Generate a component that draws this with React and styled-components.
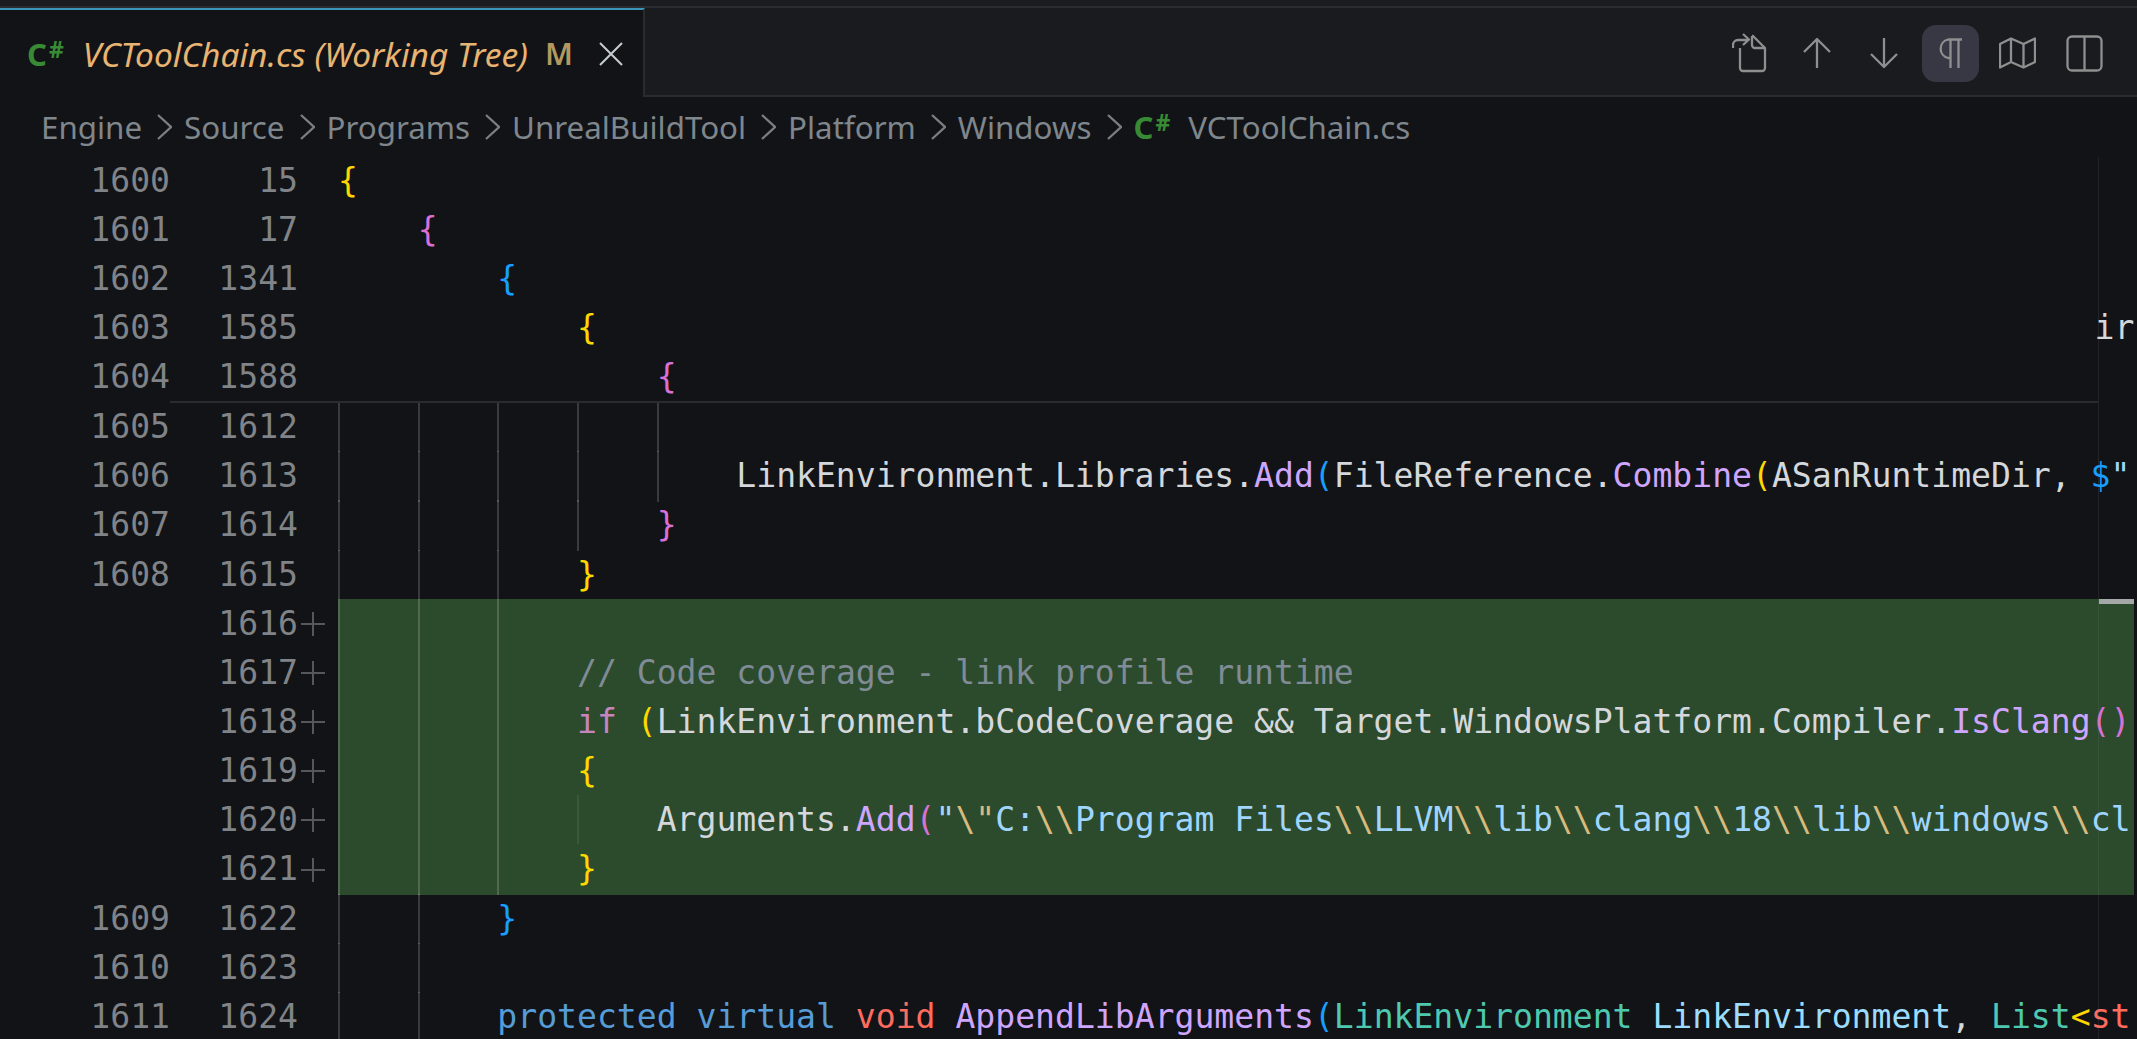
import React from 'react';
import styled, { createGlobalStyle } from 'styled-components';

const GlobalStyle = createGlobalStyle`
  html, body {
    margin: 0;
    height: 100%;
    overflow: hidden;
    background: #121316;
  }
`;

const uiFont = `'Noto Sans', 'Open Sans', sans-serif`;
const codeFont = `'DejaVu Sans Mono', 'Liberation Mono', monospace`;

const colors = {
  text: '#d4d8dc',
  comment: '#7f8c96',
  keyword: '#569cd6',
  control: '#c586c0',
  red: '#ff6b5e',
  fn: '#cfa6ff',
  type: '#4ec9b0',
  param: '#9cdcfe',
  str: '#9fd5ff',
  esc: '#d7ba7d',
  yellow: '#ffd700',
  pink: '#da70d6',
  blue: '#179fff',
};

const Page = styled.div`
  width: 2137px;
  height: 1039px;
  overflow: hidden;
  background: #121316;
  display: flex;
  flex-direction: column;
`;

const TopStrip = styled.div`
  height: 6px;
  background: #1a1c1f;
  border-bottom: 2px solid #2a2b2d;
`;

const TabBar = styled.div`
  height: 87px;
  display: flex;
  align-items: center;
  justify-content: space-between;
  background: #191b1e;
  border-bottom: 2px solid #2a2b2d;
  padding-right: 24px;
`;

const Tab = styled.div`
  width: 645px;
  height: 89px;
  margin-bottom: -2px;
  box-sizing: border-box;
  display: flex;
  align-items: center;
  padding-left: 27px;
  background: #121316;
  border-top: 2px solid #3b95b8;
  border-right: 2px solid #2a2b2d;
  font-family: ${uiFont};
`;

const CSharp = styled.span`
  display: inline-flex;
  align-items: flex-start;
  font-family: ${uiFont};
  font-weight: 700;
  font-size: 31px;
  line-height: 34px;
  color: #388a34;
  margin-right: ${(p) => p.$gap}px;
  sup {
    font-size: 23px;
    line-height: 24px;
    margin-left: 2px;
    vertical-align: baseline;
  }
`;

const TabTitle = styled.span`
  font-size: 33.5px;
  font-style: italic;
  color: #e8b473;
  white-space: nowrap;
`;

const TabBadge = styled.span`
  margin-left: 17px;
  font-size: 30px;
  font-weight: 600;
  color: #b3995f;
`;

const CloseIcon = styled.svg`
  margin-left: 25px;
  width: 26px;
  height: 26px;
  stroke: #c5cdd3;
  stroke-width: 2;
  fill: none;
`;

const Actions = styled.div`
  display: flex;
  gap: 10px;
  margin-top: 3px;
`;

const ActionButton = styled.div`
  width: 57px;
  height: 57px;
  display: flex;
  align-items: center;
  justify-content: center;
  border-radius: 14px;
  background: ${(p) => (p.$active ? '#373844' : 'transparent')};
  svg {
    fill: none;
    stroke: #8f8f8f;
    stroke-width: 2.3;
    stroke-linejoin: round;
  }
`;

const Breadcrumbs = styled.div`
  height: 59.5px;
  display: flex;
  align-items: center;
  padding-left: 41px;
  font-family: ${uiFont};
  font-size: 31.3px;
  color: #7f868c;
  white-space: nowrap;
`;

const Chevron = styled.svg`
  width: 15px;
  height: 26px;
  margin: 0 12px 0 15px;
  fill: none;
  stroke: #7a7f84;
  stroke-width: 2.3;
`;

const Editor = styled.div`
  position: relative;
  flex: 1;
  overflow: hidden;
`;

const StickySection = styled.div`
  position: relative;
  &::after {
    content: '';
    position: absolute;
    left: 170px;
    bottom: -1px;
    width: 1928px;
    height: 2px;
    background: #2a2b2d;
    z-index: 2;
  }
`;

const Row = styled.div`
  display: grid;
  grid-template-columns: 170px 128px 40px 1796px;
  height: 49.15px;
  line-height: ${(p) => (p.$sticky ? '47.15px' : '50.15px')};
  font-family: ${codeFont};
  font-size: 33.1px;
  color: #808488;
`;

const LineNumber = styled.span`
  text-align: right;
`;

const PlusCell = styled.span`
  display: flex;
  align-items: center;
  padding-left: 3px;
  svg {
    width: 24px;
    height: 24px;
    stroke: #55585b;
    stroke-width: 2;
  }
`;

const CodeCell = styled.div`
  position: relative;
  overflow: hidden;
  white-space: pre;
  color: ${colors.text};
  background: ${(p) => (p.$added ? '#2c4a2c' : 'transparent')};
`;

const Guide = styled.i`
  position: absolute;
  top: 0;
  bottom: 0;
  left: ${(p) => p.$col}ch;
  width: 2px;
  background: ${(p) => (p.$faint ? 'rgba(255,255,255,0.08)' : 'rgba(255,255,255,0.17)')};
`;

const Token = styled.span`
  color: ${(p) => colors[p.$kind]};
`;

const FarText = styled.span`
  margin-left: 75.2ch;
`;

const RulerLine = styled.div`
  position: absolute;
  left: 2098px;
  top: 0;
  bottom: 0;
  width: 1px;
  background: rgba(128, 128, 128, 0.16);
`;

const RulerThumb = styled.div`
  position: absolute;
  left: 2099px;
  top: 442px;
  width: 35px;
  height: 5px;
  background: #a4a8a6;
`;

const T = ({ k, children }) => <Token $kind={k}>{children}</Token>;

const CSharpIcon = ({ gap }) => (
  <CSharp $gap={gap}>
    C<sup>#</sup>
  </CSharp>
);

const sticky = [
  { left: 1600, right: 15, code: <T k="yellow">{'{'}</T> },
  { left: 1601, right: 17, code: <>{'    '}<T k="pink">{'{'}</T></> },
  { left: 1602, right: 1341, code: <>{' '.repeat(8)}<T k="blue">{'{'}</T></> },
  { left: 1603, right: 1585, code: <>{' '.repeat(12)}<T k="yellow">{'{'}</T><FarText>ir</FarText></> },
  { left: 1604, right: 1588, code: <>{' '.repeat(16)}<T k="pink">{'{'}</T></> },
];

const esc = (t) => <T k="esc">{t}</T>;

const lines = [
  { left: 1605, right: 1612, guides: [0, 4, 8, 12, 16] },
  {
    left: 1606,
    right: 1613,
    guides: [0, 4, 8, 12, 16],
    code: (
      <>
        {' '.repeat(20)}LinkEnvironment.Libraries.<T k="fn">Add</T><T k="blue">(</T>FileReference.<T k="fn">Combine</T><T k="yellow">(</T>ASanRuntimeDir, <T k="blue">$</T><T k="str">"</T>
      </>
    ),
  },
  { left: 1607, right: 1614, guides: [0, 4, 8, 12], code: <>{' '.repeat(16)}<T k="pink">{'}'}</T></> },
  { left: 1608, right: 1615, guides: [0, 4, 8], code: <>{' '.repeat(12)}<T k="yellow">{'}'}</T></> },
  { right: 1616, added: true, guides: [0, 4, 8] },
  { right: 1617, added: true, guides: [0, 4, 8], code: <>{' '.repeat(12)}<T k="comment">// Code coverage - link profile runtime</T></> },
  {
    right: 1618,
    added: true,
    guides: [0, 4, 8],
    code: (
      <>
        {' '.repeat(12)}<T k="control">if</T> <T k="yellow">(</T>LinkEnvironment.bCodeCoverage && Target.WindowsPlatform.Compiler.<T k="fn">IsClang</T><T k="pink">()</T>
      </>
    ),
  },
  { right: 1619, added: true, guides: [0, 4, 8], code: <>{' '.repeat(12)}<T k="yellow">{'{'}</T></> },
  {
    right: 1620,
    added: true,
    guides: [0, 4, 8],
    faint: [12],
    code: (
      <>
        {' '.repeat(16)}Arguments.<T k="fn">Add</T><T k="pink">(</T><T k="str">"</T>{esc('\\"')}<T k="str">C:</T>{esc('\\\\')}<T k="str">Program Files</T>{esc('\\\\')}<T k="str">LLVM</T>{esc('\\\\')}<T k="str">lib</T>{esc('\\\\')}<T k="str">clang</T>{esc('\\\\')}<T k="str">18</T>{esc('\\\\')}<T k="str">lib</T>{esc('\\\\')}<T k="str">windows</T>{esc('\\\\')}<T k="str">cl</T>
      </>
    ),
  },
  { right: 1621, added: true, guides: [0, 4, 8], code: <>{' '.repeat(12)}<T k="yellow">{'}'}</T></> },
  { left: 1609, right: 1622, guides: [0, 4], code: <>{' '.repeat(8)}<T k="blue">{'}'}</T></> },
  { left: 1610, right: 1623, guides: [0, 4] },
  {
    left: 1611,
    right: 1624,
    guides: [0, 4],
    code: (
      <>
        {' '.repeat(8)}<T k="keyword">protected</T> <T k="keyword">virtual</T> <T k="red">void</T> <T k="fn">AppendLibArguments</T><T k="blue">(</T><T k="type">LinkEnvironment</T> <T k="param">LinkEnvironment</T>, <T k="type">List</T><T k="yellow">{'<'}</T><T k="red">st</T>
      </>
    ),
  },
];

const CodeRow = ({ line, isSticky }) => (
  <Row $sticky={isSticky}>
    <LineNumber>{line.left}</LineNumber>
    <LineNumber>{line.right}</LineNumber>
    <PlusCell>
      {line.added && (
        <svg viewBox="0 0 24 24">
          <path d="M12 0V24M0 12H24" />
        </svg>
      )}
    </PlusCell>
    <CodeCell $added={line.added}>
      {(line.guides || []).map((col) => (
        <Guide key={col} $col={col} />
      ))}
      {(line.faint || []).map((col) => (
        <Guide key={col} $col={col} $faint />
      ))}
      {line.code || ' '}
    </CodeCell>
  </Row>
);

const crumbs = ['Engine', 'Source', 'Programs', 'UnrealBuildTool', 'Platform', 'Windows'];

const App = () => (
  <Page>
    <GlobalStyle />
    <TopStrip />
    <TabBar>
      <Tab>
        <CSharpIcon gap={19} />
        <TabTitle>VCToolChain.cs (Working Tree)</TabTitle>
        <TabBadge>M</TabBadge>
        <CloseIcon viewBox="0 0 26 26">
          <path d="M2 2L24 24M24 2L2 24" />
        </CloseIcon>
      </Tab>
      <Actions>
        <ActionButton>
          <svg width="36" height="40" viewBox="0 0 36 40">
            <path d="M8 15V35a3 3 0 0 0 3 3H30a3 3 0 0 0 3-3V15L21 3H20" />
            <path d="M20 3V12a3 3 0 0 0 3 3H33" />
            <path d="M1 15V12a5 5 0 0 1 5-5H16M11 1L17 6.5L11 12" />
          </svg>
        </ActionButton>
        <ActionButton>
          <svg width="28" height="32" viewBox="0 0 28 32">
            <path d="M14 2V31M1 15L14 2L27 15" />
          </svg>
        </ActionButton>
        <ActionButton>
          <svg width="28" height="32" viewBox="0 0 28 32">
            <path d="M14 1V30M1 17L14 30L27 17" />
          </svg>
        </ActionButton>
        <ActionButton $active>
          <svg width="24" height="32" viewBox="0 0 24 32">
            <path d="M11.5 2V31M19.5 2V31M23 2.5H9A9.5 9.5 0 0 0 9 21H11.5" />
          </svg>
        </ActionButton>
        <ActionButton>
          <svg width="37" height="32" viewBox="0 0 37 32">
            <path d="M1 7L12 1.5L24.5 7L36 1.5V25L24.5 30.5L12 25L1 30.5ZM12 1.5V25M24.5 7V30.5" />
          </svg>
        </ActionButton>
        <ActionButton>
          <svg width="37" height="37" viewBox="0 0 37 37">
            <rect x="1.5" y="1.5" width="34" height="34" rx="4.5" />
            <path d="M18.5 1.5V35.5" />
          </svg>
        </ActionButton>
      </Actions>
    </TabBar>
    <Breadcrumbs>
      {crumbs.map((name) => (
        <React.Fragment key={name}>
          <span>{name}</span>
          <Chevron viewBox="0 0 15 26">
            <path d="M1 1L14 13L1 25" />
          </Chevron>
        </React.Fragment>
      ))}
      <CSharpIcon gap={18} />
      <span>VCToolChain.cs</span>
    </Breadcrumbs>
    <Editor>
      <StickySection>
        {sticky.map((line) => (
          <CodeRow key={line.left} line={line} isSticky />
        ))}
      </StickySection>
      {lines.map((line) => (
        <CodeRow key={line.right} line={line} />
      ))}
      <RulerLine />
      <RulerThumb />
    </Editor>
  </Page>
);

export default App;
